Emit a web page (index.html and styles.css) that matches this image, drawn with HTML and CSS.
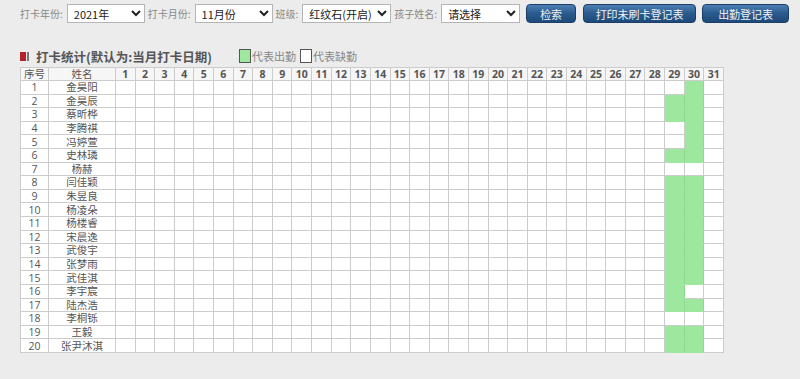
FILE: index.html
```html
<!DOCTYPE html>
<html lang="zh-CN">
<head>
    <meta charset="UTF-8">
    <meta name="viewport" content="width=device-width, initial-scale=1.0">
    <title>打卡统计</title>

    <link rel="stylesheet" href="styles.css">
</head>

<body>
    <!-- 查询条件 -->
    <form class="toolbar">
        <label for="year">打卡年份:</label>
        <select id="year" class="sel sel-year"><option>2021年</option></select>

        <label for="month">打卡月份:</label>
        <select id="month" class="sel sel-month"><option>11月份</option></select>

        <label for="class">班级:</label>
        <select id="class" class="sel sel-class"><option>红纹石(开启)</option></select>

        <label for="child">孩子姓名:</label>
        <select id="child" class="sel sel-child"><option>请选择</option></select>

        <button type="button" class="btn btn-search">检索</button>
        <button type="button" class="btn btn-print">打印未刷卡登记表</button>
        <button type="button" class="btn btn-sheet">出勤登记表</button>
    </form>

    <!-- 标题和图例 -->
    <div class="title-row">
        <span class="title-icon"><i class="red"></i><i class="gray"></i></span>
        <h2 class="title">打卡统计(默认为:当月打卡日期)</h2>
        <span class="legend"><i class="box box-on"></i>代表出勤</span>
        <span class="legend"><i class="box"></i>代表缺勤</span>
    </div>

    <!-- 打卡统计表 -->
    <table class="grid">
        <colgroup id="cols"></colgroup>
        <thead><tr id="head"></tr></thead>
        <tbody id="body"></tbody>
    </table>

<script>
    // 孩子名单和 29、30 号的出勤情况
    const kids = [
        ['金昊阳', 0, 1], ['金昊辰', 1, 1], ['蔡昕桦', 1, 1], ['李腾祺', 0, 1],
        ['冯婷萱', 0, 1], ['史林璘', 1, 1], ['杨赫', 0, 0], ['闫佳颖', 1, 1],
        ['朱昱良', 1, 1], ['杨凌朵', 1, 1], ['杨楼睿', 1, 1], ['宋晨逸', 1, 1],
        ['武俊宇', 1, 1], ['张梦雨', 1, 1], ['武佳淇', 1, 1], ['李宇宸', 1, 0],
        ['陆杰浩', 1, 1], ['李桐铄', 0, 0], ['王毅', 1, 1], ['张尹沐淇', 1, 1]
    ];

    const cols = document.getElementById('cols');
    const head = document.getElementById('head');
    const body = document.getElementById('body');

    cols.innerHTML = '<col class="c-no"><col class="c-name">' + '<col>'.repeat(31);

    let h = '<th class="th-text">序号</th><th class="th-text">姓名</th>';
    for (let d = 1; d <= 31; d++) {
        h += `<th>${d}</th>`;
    }
    head.innerHTML = h;

    let rows = '';
    kids.forEach((k, i) => {
        rows += `<tr><td class="num">${i + 1}</td><td>${k[0]}</td>`;
        for (let d = 1; d <= 31; d++) {
            let on = (d === 29 && k[1]) || (d === 30 && k[2]);
            rows += on ? '<td class="on"></td>' : '<td></td>';
        }
        rows += '</tr>';
    });
    body.innerHTML = rows;
</script>

</body>
</html>
```

FILE: styles.css
```css
/* 页面整体 */
body {
    font-family: "Noto Sans CJK SC", sans-serif;
    margin: 0;
    padding: 4px 0 0 20px;
    background-color: #ececec;
    color: #555;
}

.toolbar {
    display: flex;
    align-items: center;
    height: 19px;
    font-size: 10px;
    color: #888;
    white-space: nowrap;
}

.toolbar > * {
    flex-shrink: 0;
}

.toolbar label {
    margin-right: 4px;
}

.sel {
    height: 19px;
    margin: 0 3px 0 0;
    padding: 0 2px;
    font-family: "Noto Sans CJK SC", sans-serif;
    font-size: 11px;
    color: #222;
    background-color: #fff;
    border: 1px solid #b5b5b5;
    border-radius: 0;
}

.sel-year { width: 78px; }
.sel-month { width: 78px; }
.sel-class { width: 89px; }
.sel-child { width: 79px; }

.btn {
    height: 19px;
    padding: 0;
    font-family: "Noto Sans CJK SC", sans-serif;
    font-size: 11px;
    color: #f2f2f2;
    background: linear-gradient(#4d7fb4, #2a5a8c 50%, #1d4a7a);
    border: 1px solid #1b3f66;
    border-radius: 4px;
    cursor: pointer;
}

.btn-search { width: 50px; margin-left: 3px; }
.btn-print { width: 113px; margin-left: 7px; }
.btn-sheet { width: 87px; margin-left: 6px; }

/* 标题 */
.title-row {
    display: flex;
    align-items: center;
    margin-top: 25px;
    height: 16px;
}

.title-icon {
    display: flex;
    margin-right: 7px;
}

.title-icon i {
    display: block;
    height: 9px;
}

.title-icon .red {
    width: 6px;
    background-color: #b3222b;
}

.title-icon .gray {
    width: 2px;
    margin-left: 1px;
    background-color: #777;
}

.title {
    margin: 0 27px 0 0;
    font-size: 12.5px;
    font-weight: bold;
    color: #555;
}

.legend {
    display: flex;
    align-items: center;
    margin-right: 4px;
    font-size: 11px;
    color: #888;
}

.box {
    display: block;
    width: 10px;
    height: 12px;
    margin-right: 1px;
    background-color: #fff;
    border: 1px solid #555;
}

.box-on {
    background-color: #9ee79e;
}

/* 统计表 */
.grid {
    width: 704px;
    margin-top: 3px;
    table-layout: fixed;
    border-collapse: collapse;
    background-color: #fff;
    font-size: 10.5px;
}

.grid .c-no { width: 28px; }
.grid .c-name { width: 67px; }

.grid th {
    height: 12px;
    padding: 0;
    font-family: "Open Sans", sans-serif;
    font-size: 10.5px;
    line-height: 12px;
    font-weight: bold;
    color: #555;
    background-color: #f6f6f6;
    border: 1px solid #ccc;
}

.grid th.th-text {
    font-family: "Noto Sans CJK SC", sans-serif;
    font-weight: normal;
}

.grid td {
    height: 12.6px;
    padding: 0;
    line-height: 12px;
    text-align: center;
    color: #555;
    border: 1px solid #ccc;
}

.grid td.num {
    font-family: "Open Sans", sans-serif;
}

.grid td.on {
    background-color: #9ee79e;
    border-color: #9ee79e #8fd98f;
}
```
